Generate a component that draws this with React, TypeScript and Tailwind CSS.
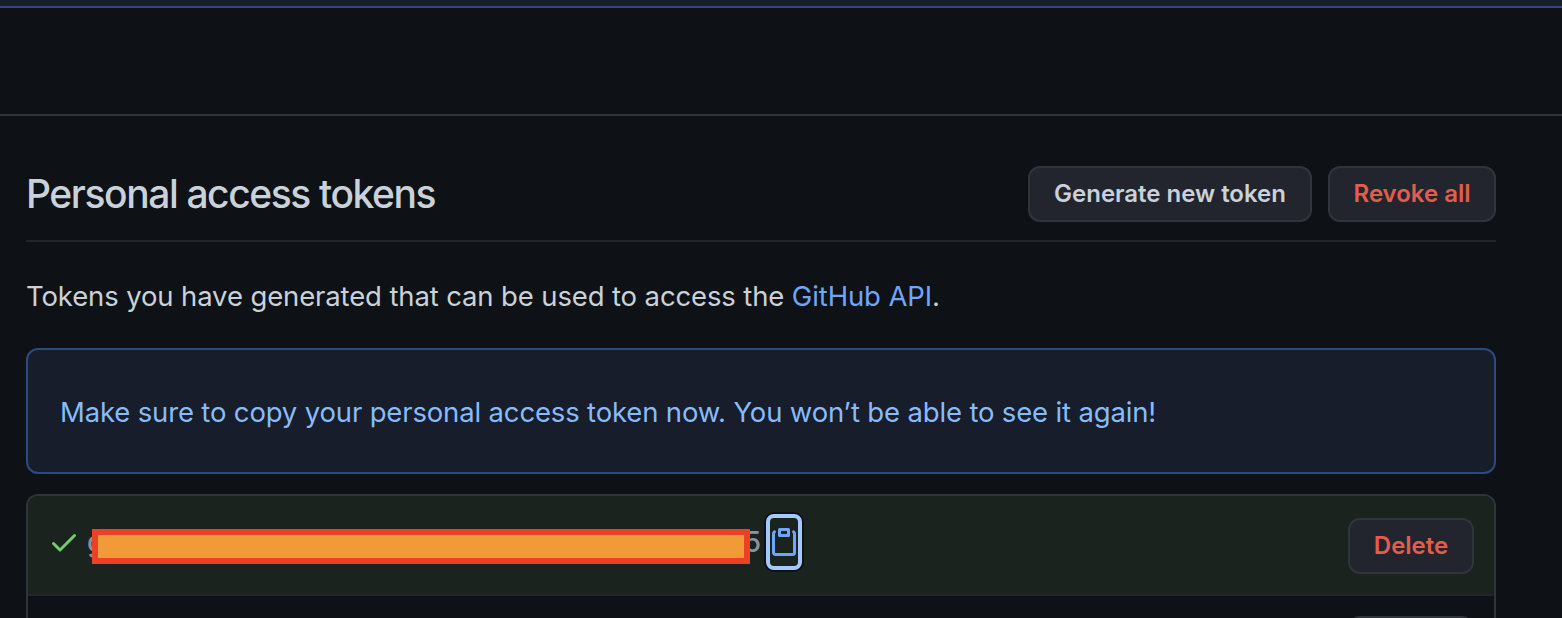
import React from "react";

const buttonBase =
  "box-border flex h-14 items-center justify-center rounded-[12px] border-2 border-[#30343b] bg-[#22252d] text-[24px] font-semibold whitespace-nowrap tracking-[-0.02px]";

function CheckIcon() {
  return (
    <svg className="h-8 w-8 shrink-0" viewBox="0 0 16 16" fill="#72ce68">
      <path d="M13.78 4.22a.75.75 0 010 1.06l-7.25 7.25a.75.75 0 01-1.06 0L2.22 9.28a.75.75 0 011.06-1.06L6 10.94l6.72-6.72a.75.75 0 011.06 0z" />
    </svg>
  );
}

function ClipboardIcon() {
  return (
    <svg className="h-8 w-8 shrink-0" viewBox="0 0 16 16" fill="#6ea6f8">
      <path
        fillRule="evenodd"
        d="M5.75 1a.75.75 0 00-.75.75v3c0 .414.336.75.75.75h4.5a.75.75 0 00.75-.75v-3a.75.75 0 00-.75-.75h-4.5zm.75 3V2.5h3V4h-3zm-2.874-.467a.75.75 0 00-.752-1.298A1.75 1.75 0 002 3.75v9.5c0 .966.784 1.75 1.75 1.75h8.5A1.75 1.75 0 0014 13.25v-9.5a1.75 1.75 0 00-.874-1.515.75.75 0 10-.752 1.298.25.25 0 01.126.217v9.5a.25.25 0 01-.25.25h-8.5a.25.25 0 01-.25-.25v-9.5a.25.25 0 01.126-.217z"
      />
    </svg>
  );
}

export default function App() {
  return (
    <div className="flex h-[618px] w-[1562px] flex-col overflow-hidden bg-[#0e1116] font-['Inter','Liberation_Sans',sans-serif] text-[#c9d1d9]">
      <div className="h-2 shrink-0 border-b-2 border-[#2f467b] bg-[#161d2c]" />
      <div className="h-[108px] shrink-0 border-b-2 border-[#313439]" />
      <main className="flex flex-col pt-[50px] pr-[66px] pl-[26px]">
        <header className="flex h-[76px] items-start border-b-2 border-[#21242a]">
          <h1 className="h-14 flex-1 text-[39px] leading-[56px] font-medium tracking-[-1.42px]">
            Personal access tokens
          </h1>
          <div className="flex gap-4">
            <button className={`${buttonBase} w-[284px]`}>Generate new token</button>
            <button className={`${buttonBase} w-[168px] text-[#e35d4f]`}>Revoke all</button>
          </div>
        </header>
        <p className="mt-[33px] h-[42px] text-[27.5px] leading-[42px] tracking-[-0.13px]">
          Tokens you have generated that can be used to access the <a className="text-[#6ea6f8]">GitHub API</a>.
        </p>
        <div className="mt-[31px] flex h-[126px] items-center rounded-[12px] border-2 border-[#2d4a80] bg-[#171d2b] px-8 pt-[3px] text-[27.5px] tracking-[-0.16px] text-[#88bbf9]">
          Make sure to copy your personal access token now. You won’t be able to see it again!
        </div>
        <section className="mt-5 flex h-[200px] flex-col overflow-hidden rounded-[12px] border-2 border-[#30343b]">
          <div className="flex h-[100px] shrink-0 items-start border-b-2 border-[#21252c] bg-[#1b231e] pr-5">
            <div className="mt-[30px] ml-5">
              <CheckIcon />
            </div>
            <div className="relative mt-[25px] ml-[7px] flex h-[42px] w-[674px] items-center justify-between text-[28px] font-medium text-[#8b949e]">
              <span>g</span>
              <span>5</span>
              <div className="absolute top-[8px] left-[5px] h-[35px] w-[658px] border-[6px] border-[#ec4125] bg-[#f09a38]" />
            </div>
            <button className="mt-[18px] ml-[5px] flex h-14 w-9 items-center justify-center rounded-[8px] border-4 border-[#a5c9fc] shadow-[0_0_0_2px_#0e1116]">
              <ClipboardIcon />
            </button>
            <button className={`${buttonBase} mt-[22px] ml-auto w-[126px] text-[#e35d4f]`}>Delete</button>
          </div>
          <div className="flex items-start pt-5 pr-5">
            <button className={`${buttonBase} ml-auto w-[126px]`} />
          </div>
        </section>
      </main>
    </div>
  );
}
